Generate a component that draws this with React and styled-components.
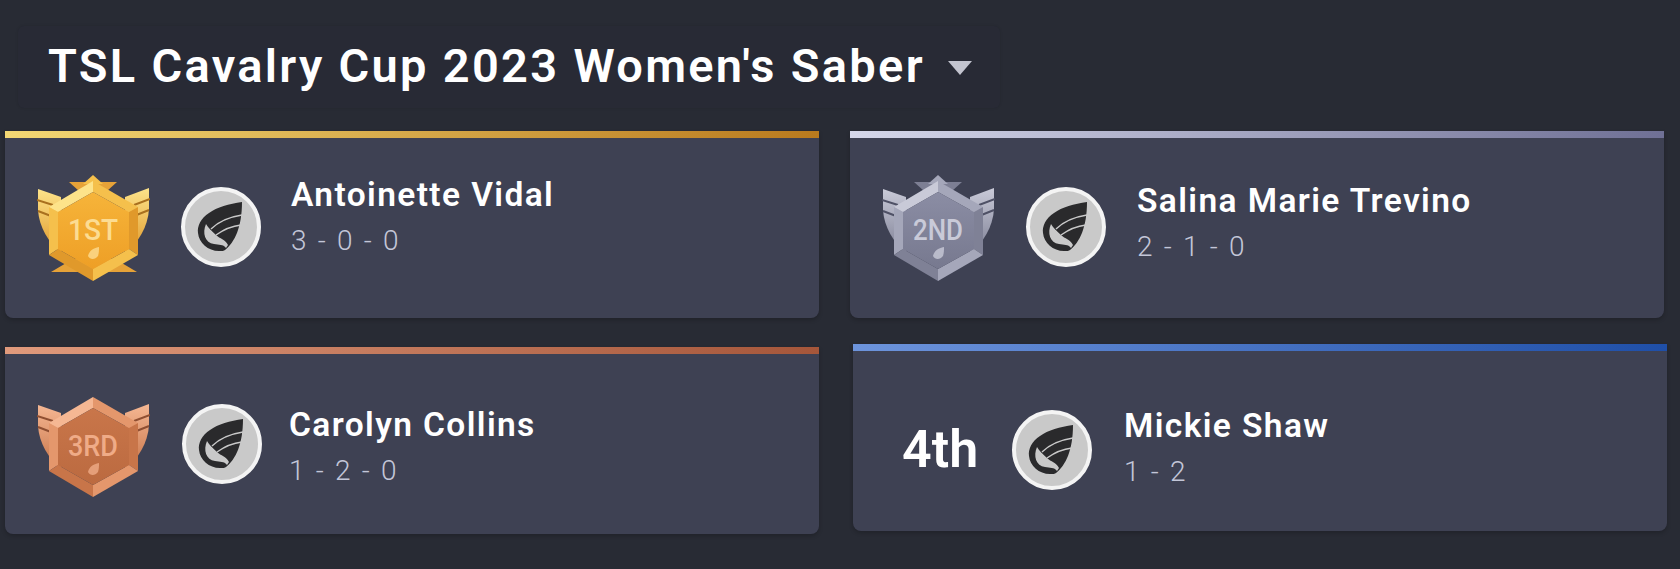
import React from 'react';
import styled, { createGlobalStyle } from 'styled-components';

const GlobalStyle = createGlobalStyle`
  html, body {
    margin: 0;
    padding: 0;
    background: #282b34;
    font-family: Roboto, "Liberation Sans", sans-serif;
  }
`;

const medalColors = {
  gold: {
    wing: '#f4c04c', wingDark: '#a9701f', light: '#fde38a', mid: '#f5c04c', dark: '#e0992b',
    face: '#f6b43a', faceDark: '#ee9f26', star: '#e6a238', text: '#fcdc92',
  },
  silver: {
    wing: '#a4a6b8', wingDark: '#4f5166', light: '#c9cad8', mid: '#a5a7ba', dark: '#7f8196',
    face: '#8b8da4', faceDark: '#77798f', star: '#7d7f94', text: '#c9cad8',
  },
  bronze: {
    wing: '#e2905f', wingDark: '#8f4f32', light: '#f5b793', mid: '#e4976c', dark: '#c87549',
    face: '#c9764a', faceDark: '#bb6a40', star: '#c97a50', text: '#efab87',
  },
};

const Medal = ({ kind, label }) => {
  const c = medalColors[kind];
  const id = `medal-${kind}`;
  return (
    <MedalSvg viewBox="0 0 113 107">
      <defs>
        <linearGradient id={`${id}-face`} x1="0" y1="0" x2="0" y2="1">
          <stop offset="0" stopColor={c.face} />
          <stop offset="1" stopColor={c.faceDark} />
        </linearGradient>
        <linearGradient id={`${id}-wing`} x1="0" y1="0" x2="0" y2="1">
          <stop offset="0" stopColor={c.light} />
          <stop offset="1" stopColor={c.dark} />
        </linearGradient>
      </defs>
      {kind !== 'bronze' && <path d="M32 7 L80 7 L70 16 L42 16 Z" fill={c.star} />}
      {kind !== 'bronze' && <path d="M56 0 L66 9 L46 9 Z" fill={c.mid} />}
      {kind === 'gold' && <path d="M14 97 L100 97 L78 84 L36 84 Z" fill={c.star} />}
      <path d="M1 14 L24 22 L24 78 C12 68 2 52 1 35 Z" fill={`url(#${id}-wing)`} />
      <path d="M112 13 L88 22 L88 78 C101 68 111 52 112 34 Z" fill={`url(#${id}-wing)`} />
      <path d="M0 25 L16 30 M1 36 L14 41" stroke={c.wingDark} strokeWidth="2" />
      <path d="M113 24 L97 30 M112 35 L97 41" stroke={c.wingDark} strokeWidth="2" />
      <path d="M56 6 L101 32 L92 37 L56 17 Z" fill={c.mid} />
      <path d="M56 6 L12 32 L21 37 L56 17 Z" fill={c.light} />
      <path d="M101 32 L101 80 L92 74 L92 37 Z" fill={c.dark} />
      <path d="M12 32 L12 80 L21 74 L21 37 Z" fill={c.mid} />
      <path d="M12 80 L56 106 L56 94 L21 74 Z" fill={c.dark} />
      <path d="M101 80 L56 106 L56 94 L92 74 Z" fill={c.mid} />
      <path d="M56 17 L92 37 L92 74 L56 94 L21 74 L21 37 Z" fill={`url(#${id}-face)`} />
      <MedalLabel x="56" y="65" fill={c.text} textLength="50" lengthAdjust="spacingAndGlyphs">{label}</MedalLabel>
      <path d="M62 72 C56 73 52 76 51 81 C53 85 58 85 61 81 C62 78 62 75 62 72 Z" fill={c.text} opacity="0.8" />
    </MedalSvg>
  );
};

const Logo = ({ top }) => (
  <LogoCircle $top={top}>
    <svg viewBox="4 4 72 72" width="72" height="72">
      <path
        d="M61 15 C48 17 36 20 28 26 C20 31 16 39 17 46 C18 56 27 64 38 64 C41 64 43 64 44 63 C54 55 61 40 61 15 Z"
        fill="#2a2a2c"
      />
      {/* light wedge between the tail and the feathers */}
      <path d="M25 37 C21 46 24 56 33 57 C38 58 42 57 45 61 L47 58 C44 52 39 52 35 48 C31 44 27 41 25 37 Z" fill="#c9c9c9" />
      <path d="M30 42 C37 35 48 30 61 28 M35 48 C42 43 51 39 60 38" stroke="#c9c9c9" strokeWidth="1.4" fill="none" />
    </svg>
  </LogoCircle>
);

const PlayerCard = ({ bar, top, offset, start, gapA, gapB, logoTop = -2, textTop, badge, name, record }) => (
  <Card $offset={offset} $top={top}>
    <TopBar $bar={bar} />
    <CardBody $start={start} $gapA={gapA} $gapB={gapB}>
      {badge}
      <Logo top={logoTop} />
      <PlayerText $textTop={textTop}>
        <PlayerName>{name}</PlayerName>
        <Record>{record}</Record>
      </PlayerText>
    </CardBody>
  </Card>
);

export default function App() {
  return (
    <Page>
      <GlobalStyle />
      <TitleBox>
        <Title>TSL Cavalry Cup 2023 Women's Saber</Title>
        <Caret />
      </TitleBox>
      <Grid>
        <PlayerCard
          bar="linear-gradient(90deg, #f3d774, #b97a1e)"
          top={23} offset={5} start={32} gapA={31} gapB={30} textTop={-22}
          badge={<Medal kind="gold" label="1ST" />}
          name="Antoinette Vidal"
          record="3 - 0 - 0"
        />
        <PlayerCard
          bar="linear-gradient(90deg, #d5d7ea, #6f7095)"
          top={23} offset={32} start={32} gapA={31} gapB={31} textTop={-10}
          badge={<Medal kind="silver" label="2ND" />}
          name="Salina Marie Trevino"
          record="2 - 1 - 0"
        />
        <PlayerCard
          bar="linear-gradient(90deg, #e09a7c, #a5563a)"
          top={29} offset={5} start={32} gapA={32} gapB={27} logoTop={0} textTop={6}
          badge={<Medal kind="bronze" label="3RD" />}
          name="Carolyn Collins"
          record="1 - 2 - 0"
        />
        <PlayerCard
          bar="linear-gradient(90deg, #6d94dc, #1f4fa8)"
          top={26} offset={35} start={49} gapA={34} gapB={32} logoTop={17} textTop={13}
          badge={<Place>4th</Place>}
          name="Mickie Shaw"
          record="1 - 2"
        />
      </Grid>
    </Page>
  );
}

const Page = styled.div`
  width: 1680px;
  height: 569px;
  overflow: hidden;
  background: #282b34;
  padding-top: 26px;
  box-sizing: border-box;
`;

const TitleBox = styled.div`
  display: flex;
  align-items: center;
  width: 982px;
  height: 82px;
  margin-left: 18px;
  padding-left: 30px;
  box-sizing: border-box;
  background: #282a35;
  border-radius: 6px;
  box-shadow: 0 0 3px rgba(0, 0, 0, 0.12);
`;

const Title = styled.div`
  margin-top: -4px;
  font-size: 47px;
  font-weight: 600;
  letter-spacing: 2.3px;
  color: #ffffff;
  white-space: nowrap;
`;

const Caret = styled.div`
  width: 0;
  height: 0;
  margin-left: 23px;
  margin-top: 2px;
  border-left: 12px solid transparent;
  border-right: 12px solid transparent;
  border-top: 14px solid #c3c4cf;
`;

const Grid = styled.div`
  display: grid;
  grid-template-columns: 818px 1fr;
`;

const Card = styled.div`
  width: 814px;
  height: 187px;
  margin-left: ${(props) => props.$offset}px;
  margin-top: ${(props) => props.$top}px;
  background: #3e4153;
  border-radius: 0 0 8px 8px;
  box-shadow: 0 2px 4px rgba(0, 0, 0, 0.2);
  overflow: hidden;
`;

const TopBar = styled.div`
  height: 7px;
  background: ${(props) => props.$bar};
`;

const CardBody = styled.div`
  display: grid;
  grid-template-columns: auto auto 1fr;
  column-gap: ${(props) => props.$gapA}px;
  align-items: center;
  height: 180px;
  padding-left: ${(props) => props.$start}px;
  box-sizing: border-box;

  > :last-child {
    margin-left: ${(props) => props.$gapB - props.$gapA}px;
  }
`;

const MedalSvg = styled.svg`
  width: 113px;
  height: 107px;
`;

const MedalLabel = styled.text`
  font-family: Roboto, sans-serif;
  font-size: 30px;
  font-weight: 500;
  text-anchor: middle;
`;

const Place = styled.div`
  width: 76px;
  margin-top: 16px;
  font-size: 52px;
  font-weight: 600;
  color: #ffffff;
`;

const LogoCircle = styled.div`
  display: flex;
  align-items: center;
  justify-content: center;
  width: 80px;
  height: 80px;
  margin-top: ${(props) => props.$top}px;
  box-sizing: border-box;
  border: 4px solid #f4f4f4;
  border-radius: 50%;
  background: #c9c9c9;
`;

const PlayerText = styled.div`
  display: flex;
  flex-direction: column;
  gap: 14px;
  margin-top: ${(props) => props.$textTop}px;
`;

const PlayerName = styled.div`
  font-size: 33.5px;
  font-weight: 600;
  letter-spacing: 1.4px;
  color: #ffffff;
  line-height: 34px;
  white-space: nowrap;
`;

const Record = styled.div`
  font-size: 28px;
  font-weight: 300;
  letter-spacing: 2.2px;
  color: #c3c6d8;
  line-height: 30px;
`;
